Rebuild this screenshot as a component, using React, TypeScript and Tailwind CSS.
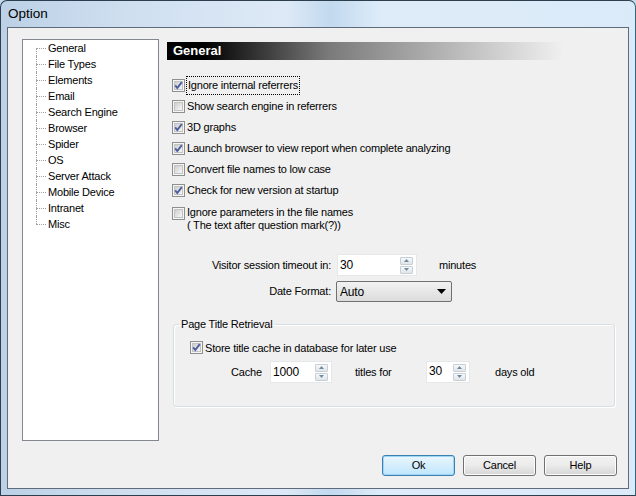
import React from 'react';

const treeItems = [
  'General',
  'File Types',
  'Elements',
  'Email',
  'Search Engine',
  'Browser',
  'Spider',
  'OS',
  'Server Attack',
  'Mobile Device',
  'Intranet',
  'Misc',
];

const options = [
  { label: 'Ignore internal referrers', checked: true, focus: true },
  { label: 'Show search engine in referrers', checked: false },
  { label: '3D graphs', checked: true },
  { label: 'Launch browser to view report when complete analyzing', checked: true },
  { label: 'Convert file names to low case', checked: false },
  { label: 'Check for new version at startup', checked: true },
];

const CheckBox = ({ checked }: { checked: boolean }) => (
  <svg width="13" height="13" viewBox="0 0 13 13" className="shrink-0">
    <defs>
      <linearGradient id="cbfill" x1="0" y1="0" x2="1" y2="1">
        <stop offset="0" stopColor="#cbcbcb" />
        <stop offset="1" stopColor="#fafafa" />
      </linearGradient>
    </defs>
    <rect x="0.5" y="0.5" width="12" height="12" fill="#f5f5f5" stroke="#8e8f8f" />
    <rect x="2.5" y="2.5" width="8" height="8" fill="url(#cbfill)" stroke="#c3c3c3" />
    {checked && (
      <path d="M3.2 6.4 L5.3 9 L9.8 3.2" fill="none" stroke="#4a5f9c" strokeWidth="1.9" />
    )}
  </svg>
);

const SpinArrows = () => (
  <div className="flex flex-col gap-[1px] mr-[3px]">
    <div className="w-[13px] h-[8px] flex items-center justify-center rounded-[1px] border border-[#c9ced4] bg-gradient-to-b from-[#f7f9fb] to-[#dfe5ea]">
      <svg width="5" height="3" viewBox="0 0 5 3">
        <path d="M0 3 L2.5 0 L5 3 Z" fill="#6e8aa3" />
      </svg>
    </div>
    <div className="w-[13px] h-[8px] flex items-center justify-center rounded-[1px] border border-[#c9ced4] bg-gradient-to-b from-[#f7f9fb] to-[#dfe5ea]">
      <svg width="5" height="3" viewBox="0 0 5 3">
        <path d="M0 0 L5 0 L2.5 3 Z" fill="#6e8aa3" />
      </svg>
    </div>
  </div>
);

const SpinBox = ({ value, width, raised }: { value: string; width: string; raised?: boolean }) => (
  <div className={`flex h-[22px] items-center bg-white border border-[#e6e7e8] ${width}`}>
    <span className={`flex-1 pl-[2px] text-[12px] ${raised ? '-mt-[3px]' : ''}`}>{value}</span>
    <SpinArrows />
  </div>
);

const Button = ({ label, focused }: { label: string; focused?: boolean }) => (
  <button
    className={`w-[73px] h-[21px] rounded-[3px] border text-[11px] text-black ${
      focused
        ? 'border-[#3c7fb1] bg-gradient-to-b from-[#eaf6fd] to-[#bee6fd] shadow-[inset_0_0_0_1px_#9fd5f5]'
        : 'border-[#707070] bg-gradient-to-b from-[#f2f2f2] via-[#ebebeb] to-[#d5d5d5] shadow-[inset_0_0_0_1px_#fcfcfc]'
    }`}
  >
    {label}
  </button>
);

export default function App() {
  return (
    <div className="w-[636px] h-[496px] font-['Liberation_Sans',Arial,sans-serif] text-[11px] tracking-[-0.2px] text-black bg-[#c6dbee]">
      <div className="w-full h-full flex flex-col rounded-t-[7px] border border-[#2d3e4f] border-r-[#2b6a73] bg-[linear-gradient(90deg,#bcd1e6_0%,#cfdff0_20%,#dde9f6_45%,#c2d9ef_52%,#deecf9_60%,#dbeaf8_100%)]">
        <div className="h-[26px] flex items-center pl-[7px] pt-[1px] text-[13.5px] tracking-normal text-black">Option</div>
        <div className="flex-1 flex flex-col mx-[6px] mb-[6px] border border-[#5f6b7a] bg-[#f0f0f0]">
          <div className="flex pl-[14px] pt-[11px]">
            {/* tree */}
            <div className="w-[137px] h-[402px] bg-white border border-[#828790] pl-[13px]">
              <ul>
                {treeItems.map((item, i) => (
                  <li key={item} className="flex h-[16px] items-center">
                    <div className="relative w-[11px] h-[16px] shrink-0">
                      <div
                        className={`absolute left-0 border-l border-dotted border-[#a0a0a0] ${
                          i === 0 ? 'top-[8px] bottom-0' : i === treeItems.length - 1 ? 'top-0 h-[8px]' : 'top-0 bottom-0'
                        }`}
                      />
                      <div className="absolute left-0 top-[8px] w-[10px] border-t border-dotted border-[#a0a0a0]" />
                    </div>
                    <span className="pl-[1px]">{item}</span>
                  </li>
                ))}
              </ul>
            </div>

            {/* right panel */}
            <div className="flex-1 ml-[8px] mt-[3px] flex flex-col">
              <div className="h-[18px] flex items-center pl-[6px] text-[13px] tracking-normal font-bold text-white bg-[linear-gradient(90deg,#000_0%,#000_8%,#7a7a7a_35%,#f0f0f0_86%)]">
                General
              </div>

              <div className="mt-[15px] pl-[5px] flex flex-col">
                {options.map((o) => (
                  <div key={o.label} className="h-[21px] flex items-center gap-[2px]">
                    <CheckBox checked={o.checked} />
                    <span className={o.focus ? 'border border-dotted border-black px-[1px] -ml-[1px]' : ''}>
                      {o.label}
                    </span>
                  </div>
                ))}
                <div className="flex items-start gap-[2px] pt-[6px]">
                  <CheckBox checked={false} />
                  <div className="leading-[13px] -mt-[1px]">
                    <div>Ignore parameters in the file names</div>
                    <div>( The text after question mark(?))</div>
                  </div>
                </div>
              </div>

              <div className="mt-[22px] flex items-center">
                <span className="w-[170px] text-right pr-[6px]">Visitor session timeout in:</span>
                <SpinBox value="30" width="w-[80px]" />
                <span className="ml-[22px]">minutes</span>
              </div>

              <div className="mt-[5px] flex items-center">
                <span className="w-[169px] text-right pr-[5px]">Date Format:</span>
                <div className="w-[116px] h-[21px] flex items-center justify-between rounded-[2px] border border-[#707070] bg-gradient-to-b from-[#f2f2f2] to-[#dcdcdc] pl-[3px] pr-[5px] text-[12px]">
                  <span>Auto</span>
                  <svg width="9" height="5" viewBox="0 0 9 5">
                    <path d="M0 0 L9 0 L4.5 5 Z" fill="#000" />
                  </svg>
                </div>
              </div>

              <fieldset className="mt-[14px] ml-[6px] w-[442px] h-[91px] border border-[#d5dfe5] rounded-[3px] shadow-[inset_1px_1px_0_#fff,1px_1px_0_#fff]">
                <legend className="ml-[5px] px-[2px]">Page Title Retrieval</legend>
                <div className="mt-[7px] ml-[16px] flex items-center gap-[2px]">
                  <CheckBox checked />
                  <span>Store title cache in database for later use</span>
                </div>
                <div className="mt-[5px] ml-[16px] flex items-center">
                  <span className="ml-[41px] w-[39px]">Cache</span>
                  <SpinBox value="1000" width="w-[62px]" />
                  <span className="ml-[23px] w-[71px]">titles for</span>
                  <SpinBox value="30" width="w-[44px]" raised />
                  <span className="ml-[25px]">days old</span>
                </div>
              </fieldset>
            </div>
          </div>

          <div className="mt-auto mb-[12px] mr-[11px] flex justify-end gap-[8px]">
            <Button label="Ok" focused />
            <Button label="Cancel" />
            <Button label="Help" />
          </div>
        </div>
      </div>
    </div>
  );
}
